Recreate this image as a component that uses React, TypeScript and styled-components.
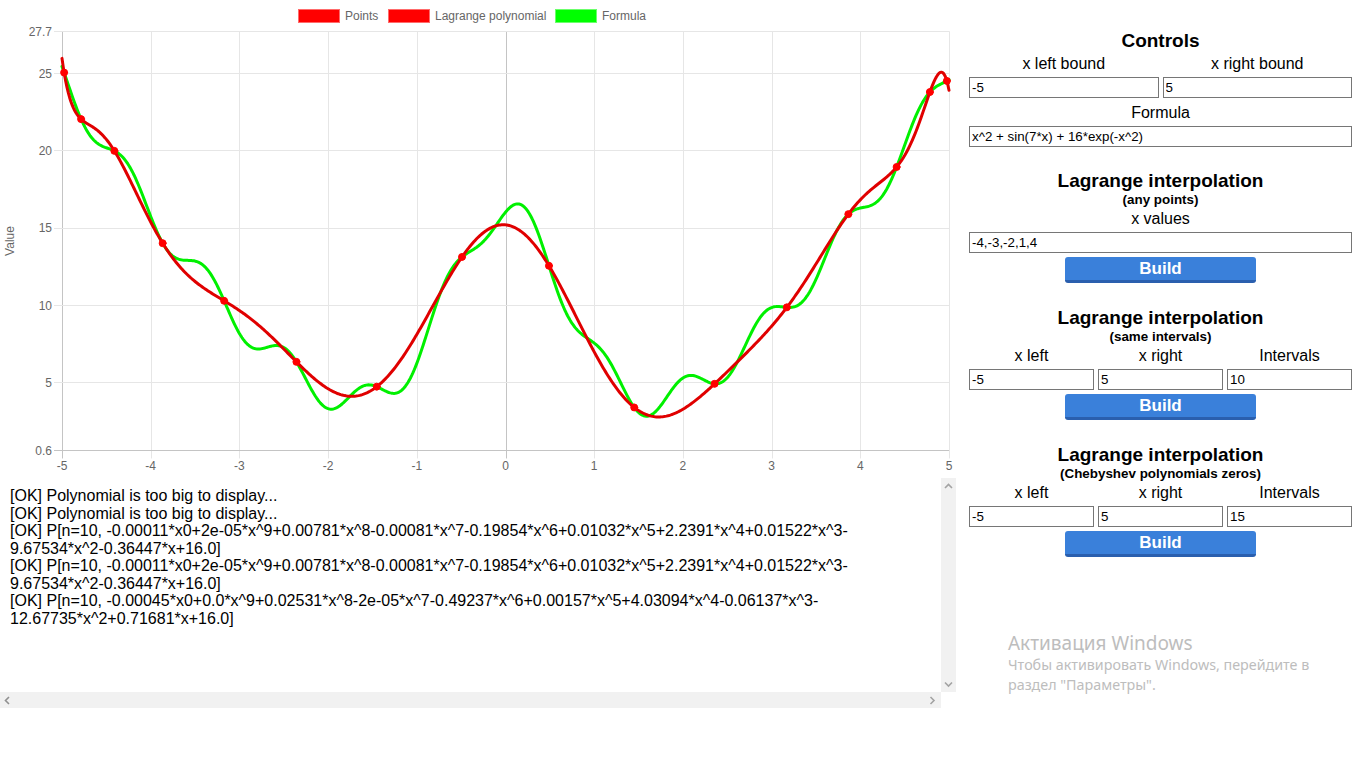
import React, { useMemo } from "react";
import styled, { createGlobalStyle } from "styled-components";

const GlobalStyle = createGlobalStyle`
  html, body { margin: 0; padding: 0; background: #fff; }
  body { font-family: "Liberation Sans", Arial, sans-serif; color: #000; }
  * { box-sizing: border-box; }
`;

const Page = styled.div`
  position: relative;
  display: grid;
  grid-template-columns: 956px 383px;
  column-gap: 13px;
  width: 1366px;
  height: 768px;
  overflow: hidden;
`;

const LeftColumn = styled.div`
  display: flex;
  flex-direction: column;
  gap: 2px;
`;

const ChartSvg = styled.svg`
  display: block;
  font-family: "Liberation Sans", Arial, sans-serif;
`;

const LogBox = styled.div`
  display: grid;
  grid-template-columns: 941px 15px;
  grid-template-rows: 214px 16px;
`;

const LogContent = styled.div`
  overflow: hidden;
  padding: 9px 51px 0 10px;
  font: 16px/17.5px "Liberation Sans", Arial, sans-serif;
  color: #000;
`;

const LogLine = styled.div`
  word-wrap: break-word;
`;

const VTrack = styled.div`
  background: #f1f1f1;
  display: flex;
  flex-direction: column;
  justify-content: space-between;
  align-items: center;
  padding: 5px 0 4px;
`;

const HTrack = styled.div`
  background: #f1f1f1;
  display: flex;
  justify-content: space-between;
  align-items: center;
  padding: 0 5px 0 4px;
`;

const Corner = styled.div`
  background: #fff;
`;

const Panel = styled.div`
  display: flex;
  flex-direction: column;
  padding-top: 29px;
  text-align: center;
`;

const Title = styled.div<{ $mt: number }>`
  margin-top: ${(p) => p.$mt}px;
  padding-top: 1px;
  font: bold 19px/22px "Liberation Sans", Arial, sans-serif;
  color: #000;
`;

const Subtitle = styled.div`
  padding-top: 1px;
  font: bold 13.4px/14px "Liberation Sans", Arial, sans-serif;
  color: #000;
`;

const Row = styled.div<{ $cols: number; $mt: number }>`
  display: grid;
  grid-template-columns: repeat(${(p) => p.$cols}, 1fr);
  column-gap: 4px;
  margin-top: ${(p) => p.$mt}px;
`;

const Label = styled.div`
  padding-top: 1px;
  font: 16px/18px "Liberation Sans", Arial, sans-serif;
  color: #000;
`;

const Field = styled.input`
  display: block;
  width: 100%;
  height: 21px;
  margin: 0;
  padding: 1px 2px;
  border: 1px solid #767676;
  border-radius: 0;
  font: 13.33px "Liberation Sans", Arial, sans-serif;
  color: #000;
  background: #fff;
  outline: none;
`;

const BuildButton = styled.button`
  align-self: center;
  width: 191px;
  height: 26px;
  margin-top: 4px;
  padding: 0;
  background: #3a80da;
  border: none;
  border-bottom: 3px solid #2a5fae;
  border-radius: 3px;
  color: #fff;
  font: bold 17px/23px "Liberation Sans", Arial, sans-serif;
  cursor: pointer;
`;

const Watermark = styled.div`
  position: absolute;
  left: 1008px;
  top: 632px;
  color: #bdbdbd;
  font-family: "Noto Sans", "Open Sans", sans-serif;
  pointer-events: none;
`;

const WatermarkTitle = styled.div`
  font-size: 19px;
  line-height: 22px;
`;

const WatermarkText = styled.div`
  font-size: 14.3px;
  line-height: 20px;
  padding-top: 1px;
  margin-bottom: -1px;
`;

/* ---------- chart ---------- */

const X0 = 62;
const XS = 88.7;
const Y25 = 73;
const YS = 15.47;
const px = (x: number) => X0 + (x + 5) * XS;
const py = (v: number) => Y25 + (25 - v) * YS;
const f = (x: number) => x * x + Math.sin(7 * x) + 16 * Math.exp(-x * x);

const GRID = "#e6e6e6";
const AXIS = "#c4c4c4";
const TICK = "#666";

function Chart() {
  const { formulaPath, lagrangePath, nodes } = useMemo(() => {
    const n = 16;
    const xs: number[] = [];
    for (let k = 0; k < n; k++) xs.push(5 * Math.cos(((2 * k + 1) * Math.PI) / (2 * n)));
    xs.sort((a, b) => a - b);
    const ys = xs.map(f);
    const lag = (x: number) => {
      let s = 0;
      for (let i = 0; i < n; i++) {
        let p = ys[i];
        for (let j = 0; j < n; j++) if (j !== i) p *= (x - xs[j]) / (xs[i] - xs[j]);
        s += p;
      }
      return s;
    };
    const steps = 700;
    let fp = "";
    let lp = "";
    for (let i = 0; i <= steps; i++) {
      const x = -5 + (10 * i) / steps;
      fp += `${i ? "L" : "M"}${px(x).toFixed(2)},${py(f(x)).toFixed(2)}`;
      lp += `${i ? "L" : "M"}${px(x).toFixed(2)},${py(lag(x)).toFixed(2)}`;
    }
    return {
      formulaPath: fp,
      lagrangePath: lp,
      nodes: xs.map((x, i) => ({ x: px(x), y: py(ys[i]) })),
    };
  }, []);

  const xTicks = [-5, -4, -3, -2, -1, 0, 1, 2, 3, 4, 5];
  const yTicks = [27.7, 25, 20, 15, 10, 5, 0.6];
  const top = py(27.7);
  const bottom = py(0.6);

  return (
    <ChartSvg width={956} height={476} viewBox="0 0 956 476">
      <defs>
        <clipPath id="plot">
          <rect x={px(-5) - 4} y={top - 4} width={px(5) - px(-5) + 8} height={bottom - top + 8} />
        </clipPath>
      </defs>

      {/* legend */}
      <g fontSize={12} fill={TICK}>
        <rect x={298.5} y={9.5} width={41} height={13} fill="#ff0000" stroke="#ff6b6b" />
        <text x={345} y={20}>Points</text>
        <rect x={388.5} y={9.5} width={41} height={13} fill="#ff0000" stroke="#ff6b6b" />
        <text x={435} y={20}>Lagrange polynomial</text>
        <rect x={555.5} y={9.5} width={41} height={13} fill="#00ff00" stroke="#6bff6b" />
        <text x={602} y={20}>Formula</text>
      </g>

      {/* y axis title */}
      <text x={0} y={0} fontSize={12} fill={TICK} textAnchor="middle" transform="translate(14 241) rotate(-90)">
        Value
      </text>

      {/* grid */}
      {xTicks.map((t) => {
        const x = Math.round(px(t)) + 0.5;
        return (
          <line key={"v" + t} x1={x} x2={x} y1={top} y2={bottom + 8} stroke={t === 0 || t === -5 ? AXIS : GRID} strokeWidth={1} />
        );
      })}
      {yTicks.map((t) => {
        const y = Math.round(py(t)) + 0.5;
        return (
          <line key={"h" + t} x1={px(-5) - 8} x2={px(5)} y1={y} y2={y} stroke={t === 0.6 ? AXIS : GRID} strokeWidth={1} />
        );
      })}

      {/* tick labels */}
      <g fontSize={12} fill={TICK}>
        {yTicks.map((t) => (
          <text key={"yl" + t} x={52} y={py(t) + 4.5} textAnchor="end">
            {String(t)}
          </text>
        ))}
        {xTicks.map((t) => (
          <text key={"xl" + t} x={px(t)} y={470} textAnchor="middle">
            {String(t)}
          </text>
        ))}
      </g>

      {/* data */}
      <g clipPath="url(#plot)" fill="none" strokeLinejoin="round" strokeLinecap="round">
        <path d={formulaPath} stroke="#00f000" strokeWidth={3} />
        <path d={lagrangePath} stroke="#e00000" strokeWidth={3} />
        {nodes.map((p, i) => (
          <circle key={i} cx={p.x} cy={p.y} r={3.5} fill="#ff0000" stroke="#ff0000" strokeWidth={1} />
        ))}
      </g>
    </ChartSvg>
  );
}

/* ---------- scroll arrows ---------- */

const Chevron = ({ dir, color = "#a3a3a3" }: { dir: "up" | "down" | "left" | "right"; color?: string }) => {
  const d = {
    up: "M1,5 L4.5,1.5 L8,5",
    down: "M1,1.5 L4.5,5 L8,1.5",
    left: "M5,1 L1.5,4.5 L5,8",
    right: "M1.5,1 L5,4.5 L1.5,8",
  }[dir];
  const vertical = dir === "up" || dir === "down";
  return (
    <svg width={vertical ? 9 : 7} height={vertical ? 7 : 9} viewBox={vertical ? "0 0 9 7" : "0 0 7 9"}>
      <path d={d} fill="none" stroke={color} strokeWidth={1.6} />
    </svg>
  );
};

const logLines = [
  "[OK] Polynomial is too big to display...",
  "[OK] Polynomial is too big to display...",
  "[OK] P[n=10, -0.00011*x0+2e-05*x^9+0.00781*x^8-0.00081*x^7-0.19854*x^6+0.01032*x^5+2.2391*x^4+0.01522*x^3-9.67534*x^2-0.36447*x+16.0]",
  "[OK] P[n=10, -0.00011*x0+2e-05*x^9+0.00781*x^8-0.00081*x^7-0.19854*x^6+0.01032*x^5+2.2391*x^4+0.01522*x^3-9.67534*x^2-0.36447*x+16.0]",
  "[OK] P[n=10, -0.00045*x0+0.0*x^9+0.02531*x^8-2e-05*x^7-0.49237*x^6+0.00157*x^5+4.03094*x^4-0.06137*x^3-12.67735*x^2+0.71681*x+16.0]",
];

export default function App() {
  return (
    <>
      <GlobalStyle />
      <Page>
        <LeftColumn>
          <Chart />
          <LogBox>
            <LogContent>
              {logLines.map((l, i) => (
                <LogLine key={i}>{l}</LogLine>
              ))}
            </LogContent>
            <VTrack>
              <Chevron dir="up" />
              <Chevron dir="down" />
            </VTrack>
            <HTrack>
              <Chevron dir="left" color="#909090" />
              <Chevron dir="right" />
            </HTrack>
            <Corner />
          </LogBox>
        </LeftColumn>

        <Panel>
          <Title $mt={0}>Controls</Title>
          <Row $cols={2} $mt={2}>
            <Label>x left bound</Label>
            <Label>x right bound</Label>
          </Row>
          <Row $cols={2} $mt={4}>
            <Field defaultValue="-5" />
            <Field defaultValue="5" />
          </Row>
          <Row $cols={1} $mt={5}>
            <Label>Formula</Label>
          </Row>
          <Row $cols={1} $mt={4}>
            <Field defaultValue="x^2 + sin(7*x) + 16*exp(-x^2)" />
          </Row>

          <Title $mt={22}>Lagrange interpolation</Title>
          <Subtitle>(any points)</Subtitle>
          <Row $cols={1} $mt={2}>
            <Label>x values</Label>
          </Row>
          <Row $cols={1} $mt={4}>
            <Field defaultValue="-4,-3,-2,1,4" />
          </Row>
          <BuildButton>Build</BuildButton>

          <Title $mt={23}>Lagrange interpolation</Title>
          <Subtitle>(same intervals)</Subtitle>
          <Row $cols={3} $mt={2}>
            <Label>x left</Label>
            <Label>x right</Label>
            <Label>Intervals</Label>
          </Row>
          <Row $cols={3} $mt={4}>
            <Field defaultValue="-5" />
            <Field defaultValue="5" />
            <Field defaultValue="10" />
          </Row>
          <BuildButton>Build</BuildButton>

          <Title $mt={23}>Lagrange interpolation</Title>
          <Subtitle>(Chebyshev polynomials zeros)</Subtitle>
          <Row $cols={3} $mt={2}>
            <Label>x left</Label>
            <Label>x right</Label>
            <Label>Intervals</Label>
          </Row>
          <Row $cols={3} $mt={4}>
            <Field defaultValue="-5" />
            <Field defaultValue="5" />
            <Field defaultValue="15" />
          </Row>
          <BuildButton>Build</BuildButton>
        </Panel>

        <Watermark>
          <WatermarkTitle>Активация Windows</WatermarkTitle>
          <WatermarkText>Чтобы активировать Windows, перейдите в</WatermarkText>
          <WatermarkText>раздел "Параметры".</WatermarkText>
        </Watermark>
      </Page>
    </>
  );
}
